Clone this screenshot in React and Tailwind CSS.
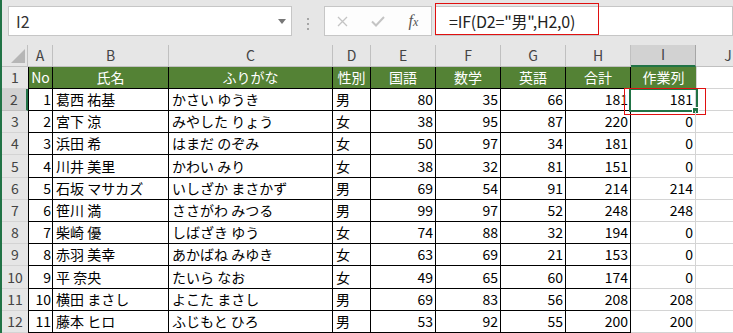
import React from 'react';

const rows = [
  [1, '葛西 祐基', 'かさい ゆうき', '男', 80, 35, 66, 181, 181],
  [2, '宮下 涼', 'みやした りょう', '女', 38, 95, 87, 220, 0],
  [3, '浜田 希', 'はまだ のぞみ', '女', 50, 97, 34, 181, 0],
  [4, '川井 美里', 'かわい みり', '女', 38, 32, 81, 151, 0],
  [5, '石坂 マサカズ', 'いしざか まさかず', '男', 69, 54, 91, 214, 214],
  [6, '笹川 満', 'ささがわ みつる', '男', 99, 97, 52, 248, 248],
  [7, '柴崎 優', 'しばざき ゆう', '女', 74, 88, 32, 194, 0],
  [8, '赤羽 美幸', 'あかばね みゆき', '女', 63, 69, 21, 153, 0],
  [9, '平 奈央', 'たいら なお', '女', 49, 65, 60, 174, 0],
  [10, '横田 まさし', 'よこた まさし', '男', 69, 83, 56, 208, 208],
  [11, '藤本 ヒロ', 'ふじもと ひろ', '男', 53, 92, 55, 200, 200],
];

const font = { fontFamily: '"Noto Sans CJK JP", "Noto Sans", sans-serif' };

const colLetters = [
  { l: 'A', w: 'w-[25px]' },
  { l: 'B', w: 'w-[116px]' },
  { l: 'C', w: 'w-[164px]' },
  { l: 'D', w: 'w-[38px]' },
  { l: 'E', w: 'w-[65px]' },
  { l: 'F', w: 'w-[65px]' },
  { l: 'G', w: 'w-[65px]' },
  { l: 'H', w: 'w-[65px]' },
];

const numCell = 'w-[65px] shrink-0 border-r border-b border-black flex items-center justify-end pr-[2px]';

const FormulaBar = () => (
  <div className="h-[46px] flex pt-[6px] pl-[6px] bg-[#e6e6e6]">
    {/* name box */}
    <div className="w-[284px] h-[30px] bg-white border border-[#c6c6c6] flex items-center justify-between pl-[7px] pr-[5px]">
      <span className="text-[16px] text-[#333]">I2</span>
      <svg width="8" height="5" viewBox="0 0 8 5"><path d="M0 0h8L4 5z" fill="#777" /></svg>
    </div>
    <div className="w-[32px] flex flex-col items-center justify-center gap-[3px] pb-[2px]">
      <div className="w-[2px] h-[2px] bg-[#a6a6a6]" />
      <div className="w-[2px] h-[2px] bg-[#a6a6a6]" />
      <div className="w-[2px] h-[2px] bg-[#a6a6a6]" />
    </div>
    {/* cancel / enter / fx */}
    <div className="w-[108px] h-[30px] bg-[#fdfdfd] border border-[#c6c6c6] flex">
      <div className="w-[36px] flex items-center justify-center">
        <svg width="11" height="11" viewBox="0 0 11 11"><path d="M1 1l9 9M10 1l-9 9" stroke="#c4c4c4" strokeWidth="1.3" /></svg>
      </div>
      <div className="w-[36px] flex items-center justify-center">
        <svg width="14" height="11" viewBox="0 0 14 11"><path d="M1 5.5l4 4 8-8.5" stroke="#c4c4c4" strokeWidth="2" fill="none" /></svg>
      </div>
      <div className="w-[36px] flex items-center justify-center">
        <span className="italic text-[#555] text-[16px]" style={{ fontFamily: '"Liberation Serif", serif' }}>
          f<span className="text-[12px]">x</span>
        </span>
      </div>
    </div>
    {/* formula input */}
    <div className="relative ml-[3px] flex-1 h-[30px] bg-white border border-[#c6c6c6] flex items-center pl-[13px]">
      <span className="text-[16px] text-[#222] tracking-[-0.2px]" style={font}>=IF(D2="男",H2,0)</span>
      <div className="absolute left-[-1px] top-[-4px] w-[164px] h-[32px] border border-[#e01010]" />
    </div>
  </div>
);

const ColumnHeader = () => (
  <div className="flex h-[22px] text-[14px] text-[#444]">
    <div className="w-[26px] shrink-0 bg-[#e6e6e6] border-r border-b border-[#c0c0c0] flex items-end justify-end pr-[2px] pb-[3px]">
      <svg width="14" height="14" viewBox="0 0 14 14"><path d="M0 14h14V0z" fill="#b6b6b6" /></svg>
    </div>
    {colLetters.map((c) => (
      <div key={c.l} className={`${c.w} shrink-0 bg-[#e6e6e6] border-r border-b border-[#c0c0c0] flex items-center justify-center`}>
        {c.l}
      </div>
    ))}
    <div className="w-[65px] shrink-0 bg-[#d2d2d2] border-r border-[#a6a6a6] border-b-2 border-b-[#217346] flex items-center justify-center text-[#444]">
      I
    </div>
    <div className="w-[65px] shrink-0 bg-[#e6e6e6] border-r border-b border-[#c0c0c0] flex items-center justify-center">
      J
    </div>
    <div className="w-[65px] shrink-0 bg-[#e6e6e6] border-b border-[#c0c0c0]" />
  </div>
);

const HeadRow = () => (
  <div className="flex h-[23px] text-[14px]">
    <div className="w-[26px] shrink-0 bg-[#e6e6e6] border-b border-[#d4d4d4] flex items-center justify-center text-[#444]">1</div>
    <div className="w-[25px] shrink-0 bg-[#548235] text-white border-l border-r border-b border-black flex items-center justify-center">No</div>
    <div className="w-[116px] shrink-0 bg-[#548235] text-white border-r border-b border-black flex items-center justify-center">氏名</div>
    <div className="w-[164px] shrink-0 bg-[#548235] text-white border-r border-b border-black flex items-center justify-center">ふりがな</div>
    <div className="w-[38px] shrink-0 bg-[#548235] text-white border-r border-b border-black flex items-center justify-center">性別</div>
    <div className="w-[65px] shrink-0 bg-[#548235] text-white border-r border-b border-black flex items-center justify-center">国語</div>
    <div className="w-[65px] shrink-0 bg-[#548235] text-white border-r border-b border-black flex items-center justify-center">数学</div>
    <div className="w-[65px] shrink-0 bg-[#548235] text-white border-r border-b border-black flex items-center justify-center">英語</div>
    <div className="w-[65px] shrink-0 bg-[#548235] text-white border-r border-b border-black flex items-center justify-center">合計</div>
    <div className="w-[65px] shrink-0 bg-[#548235] text-white border-b border-[#548235] flex items-center justify-center">作業列</div>
    <div className="w-[65px] shrink-0 bg-white border-l border-r border-b border-[#d4d4d4]" />
    <div className="w-[65px] shrink-0 bg-white border-b border-[#d4d4d4]" />
  </div>
);

const DataRow = ({ r, n }) => {
  const selected = n === 2;
  return (
    <div className="flex h-[23px] text-[14px] text-black">
      <div
        className={
          selected
            ? 'w-[26px] shrink-0 bg-[#d2d2d2] border-b border-[#c0c0c0] border-r-2 border-r-[#217346] flex items-center justify-center text-[#444]'
            : 'w-[26px] shrink-0 bg-[#e6e6e6] border-b border-[#d4d4d4] flex items-center justify-center text-[#444]'
        }
      >
        {n}
      </div>
      <div className="w-[25px] shrink-0 border-l border-r border-b border-black flex items-center justify-end pr-[1px]">{r[0]}</div>
      <div className="w-[116px] shrink-0 border-r border-b border-black flex items-center pl-[3px] whitespace-nowrap">{r[1]}</div>
      <div className="w-[164px] shrink-0 border-r border-b border-black flex items-center pl-[3px] whitespace-nowrap">{r[2]}</div>
      <div className="w-[38px] shrink-0 border-r border-b border-black flex items-center pl-[3px]">{r[3]}</div>
      <div className={numCell}>{r[4]}</div>
      <div className={numCell}>{r[5]}</div>
      <div className={numCell}>{r[6]}</div>
      <div className={numCell}>{r[7]}</div>
      <div className="relative w-[65px] shrink-0 border-r border-b border-[#d4d4d4] flex items-center justify-end pr-[2px]">
        {r[8]}
        {selected && (
          <>
            <div className="absolute left-[-2px] top-[-1px] right-[-3px] bottom-[-2px] border-2 border-[#217346]" />
            <div className="absolute right-[-4px] bottom-[-4px] w-[7px] h-[7px] bg-[#217346] border border-white" />
            <div className="absolute left-[-7px] top-[-1px] w-[82px] h-[27px] border border-[#e01010]" />
          </>
        )}
      </div>
      <div className="w-[65px] shrink-0 border-r border-b border-[#d4d4d4]" />
      <div className="w-[65px] shrink-0 border-b border-[#d4d4d4]" />
    </div>
  );
};

const App = () => {
  return (
    <div className="w-[733px] h-[333px] overflow-hidden flex bg-white" style={font}>
      <div className="w-[2px] shrink-0 bg-[#217346]" />
      <div className="flex-1 flex flex-col min-w-0">
        <FormulaBar />
        <ColumnHeader />
        <HeadRow />
        {rows.map((r, i) => (
          <DataRow key={r[0]} r={r} n={i + 2} />
        ))}
      </div>
    </div>
  );
};

export default App;
